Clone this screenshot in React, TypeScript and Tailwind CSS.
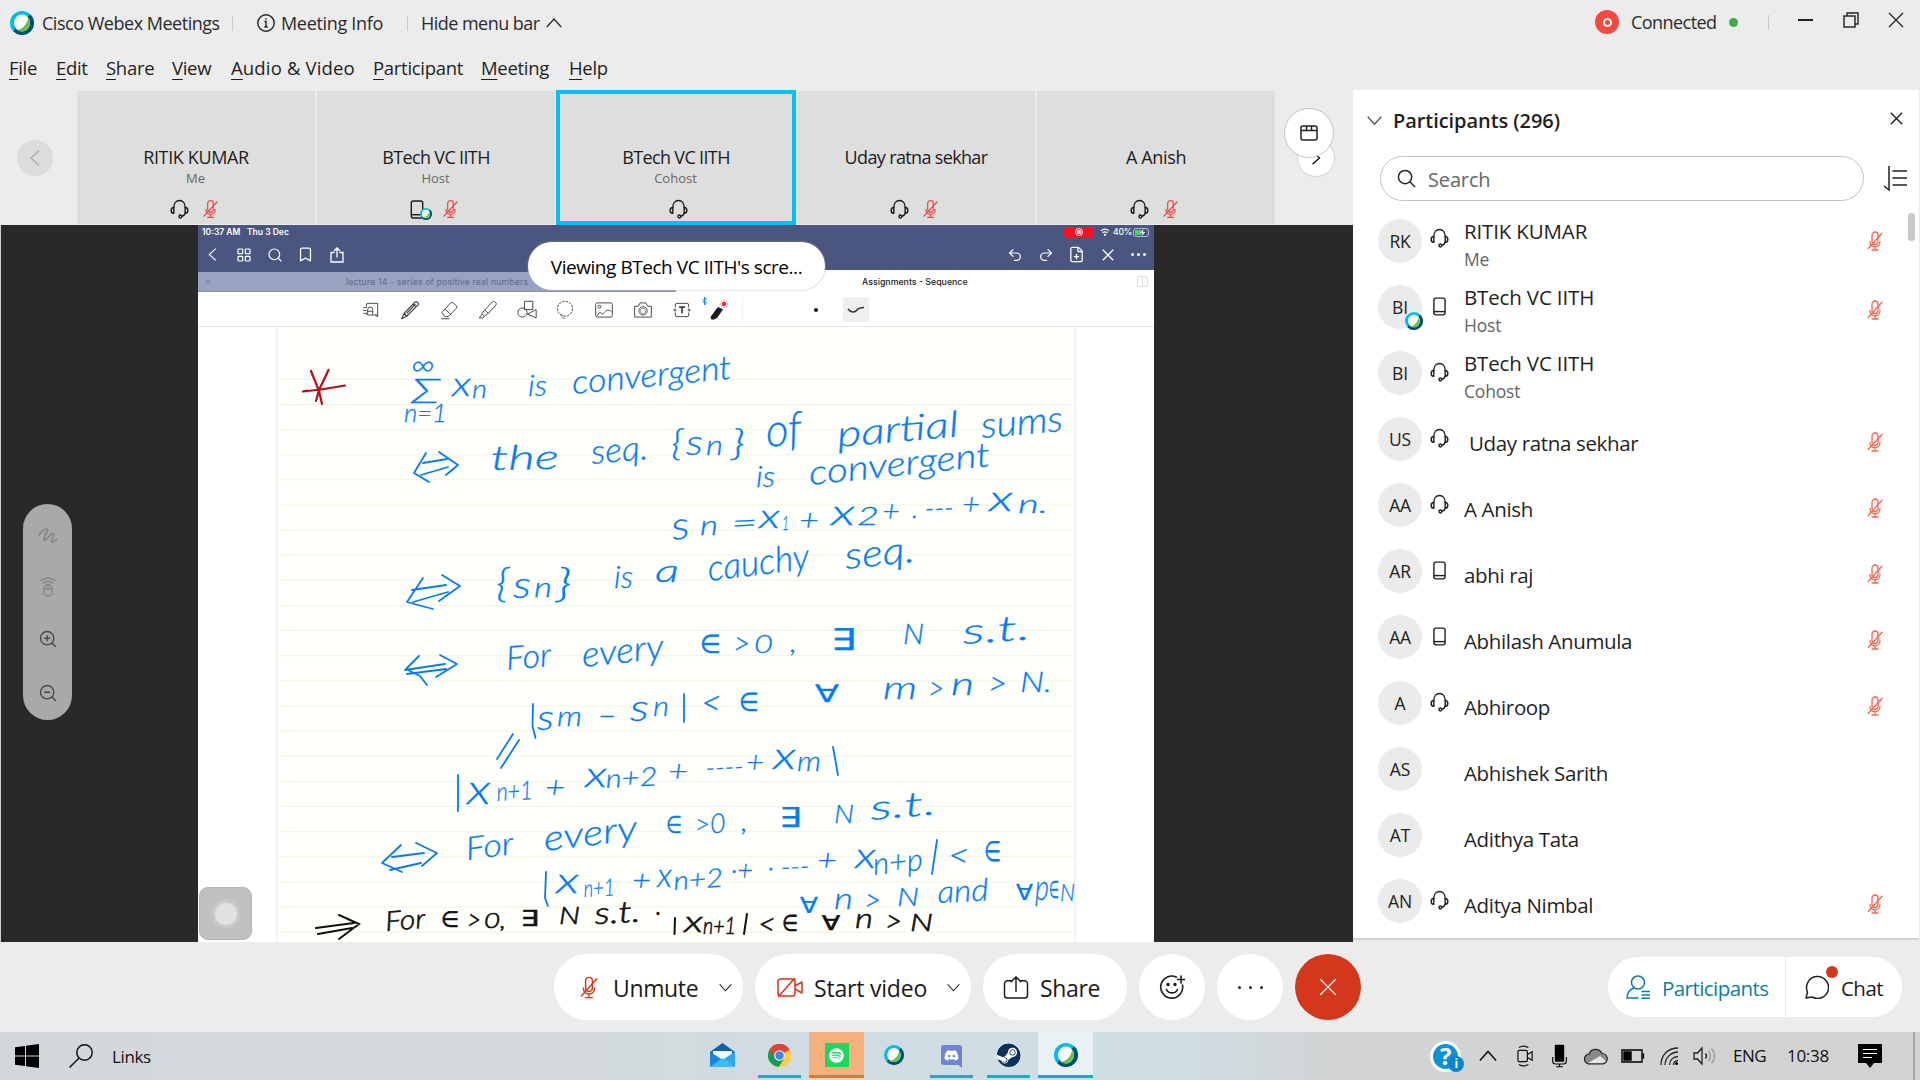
import React from "react";
import { Search, ZoomIn, ZoomOut, Bookmark, LayoutGrid, Undo2, Redo2, FilePlus } from "lucide-react";
import { FaDiscord, FaSteam, FaSpotify } from "react-icons/fa";

const WebexLogo = ({ className = "" }: { className?: string }) => (
  <svg viewBox="0 0 24 24" className={className}>
    <circle cx="12" cy="12" r="12" fill="#00bceb" />
    <path d="M20.5 3.5A12 12 0 0 1 3.5 20.5L8 12z" fill="#005073" />
    <ellipse cx="12" cy="12" rx="8" ry="8.4" fill="#fff" />
    <path d="M18.2 6.6c2.6 3.4 2.3 8.3-.8 11.400-2.900 2.900-7.200 3.300-10.700 1.100C12.500 18.300 17.400 13.500 18.200 6.600z" fill="#6cc04a" />
  </svg>
);

const Headset = ({ className = "" }: { className?: string }) => (
  <svg viewBox="0 0 20 20" className={className} fill="none" stroke="currentColor" strokeWidth="1.5" strokeLinecap="round">
    <path d="M4 8.500C4 4 6.500 1 10 1s6 3 6 7.500" />
    <path d="M4 8.500C.3 8.500.3 14.500 4 14.500zM16 8.500c3.700 0 3.700 6 0 6z" />
    <path d="M16 14.500c-.4 1.800-1.500 2.700-3.600 3.300" />
    <circle cx="10.900" cy="17.900" r="1.500" />
  </svg>
);

const MicOff = ({ className = "" }: { className?: string }) => (
  <svg viewBox="0 0 16 20" className={className} fill="none" stroke="currentColor" strokeWidth="1.300" strokeLinecap="round">
    <rect x="5" y="1" width="6" height="12.500" rx="3" />
    <path d="M3 10.500c0 7 10 7 10 0M8 16v3M5 19h6M1.200 17.500L15 2.300" />
  </svg>
);

const Phone = ({ className = "" }: { className?: string }) => (
  <svg viewBox="0 0 14 20" className={className} fill="none" stroke="currentColor" strokeWidth="1.500">
    <rect x="1" y="1" width="12" height="18" rx="2.200" />
    <path d="M1 15.500h12" />
  </svg>
);

const Chevron = ({ d, className = "" }: { d: "up" | "down" | "left" | "right"; className?: string }) => (
  <svg viewBox="0 0 20 20" className={className} fill="none" stroke="currentColor" strokeWidth="1.700">
    <path d={{ up: "M1 15L10 5l9 10", down: "M1 5l9 10 9-10", left: "M15 1L5 10l10 9", right: "M5 1l10 9L5 19" }[d]} />
  </svg>
);

const Cross = ({ className = "", w = 1.5 }: { className?: string; w?: number }) => (
  <svg viewBox="0 0 16 16" className={className} fill="none" stroke="currentColor" strokeWidth={w}>
    <path d="M1 1l14 14M15 1L1 15" />
  </svg>
);

const Divider = ({ className = "" }: { className?: string }) => <div className={`h-[15px] w-px bg-[#c9c9c9] ${className}`} />;

function TitleBar() {
  return (
    <div className="flex h-[46px] items-center text-[18px] text-[#2b2b2b]">
      <WebexLogo className="ml-[10px] h-6 w-6" />
      <span className="ml-2 w-[190px] tracking-[-0.480px]">Cisco Webex Meetings</span>
      <Divider />
      <svg viewBox="0 0 18 18" className="ml-6 h-[18px] w-[18px]" fill="none" stroke="#222" strokeWidth="1.400">
        <circle cx="9" cy="9" r="8.200" />
        <path d="M7.500 7.500H9V13M7.300 13h3.500M8.900 4.300v1.500" />
      </svg>
      <span className="ml-[6px] w-[126px] tracking-[-0.320px]">Meeting Info</span>
      <Divider />
      <span className="ml-[13px] w-[125px] tracking-[-0.530px]">Hide menu bar</span>
      <Chevron d="up" className="h-4 w-4" />
      <div className="ml-auto flex items-center pb-[2px]">
        <div className="flex h-6 w-6 items-center justify-center rounded-full bg-[#f5483f]">
          <div className="h-[9px] w-[9px] rounded-full border-2 border-white" />
        </div>
        <span className="ml-[12px] w-[98px] tracking-[-0.550px]">Connected</span>
        <div className="h-[9px] w-[9px] rounded-full bg-[#3fad46]" />
        <Divider className="ml-[30px]" />
        <div className="mb-[4px] ml-[29px] flex items-center">
          <div className="h-[2px] w-[15px] bg-[#222]" />
          <svg viewBox="0 0 16 16" className="ml-[30px] h-4 w-4" fill="none" stroke="#222" strokeWidth="1.400">
            <rect x="1" y="4" width="11" height="11" />
            <path d="M4 4V1h11v11h-3" />
          </svg>
          <Cross className="mr-4 ml-[29px] h-4 w-4" w={1.4} />
        </div>
      </div>
    </div>
  );
}

const menus: [string, string][] = [
  ["File", "w-[47px]"],
  ["Edit", "w-[50px]"],
  ["Share", "w-[66px]"],
  ["View", "w-[59px]"],
  ["Audio & Video", "w-[142px] tracking-[0.150px]"],
  ["Participant", "w-[108px]"],
  ["Meeting", "w-[88px]"],
  ["Help", "w-[60px]"],
];

function MenuBar() {
  return (
    <div className="flex h-[44px] items-center pl-[9px] text-[18.500px] tracking-[-0.300px] whitespace-nowrap text-[#1f1f1f]">
      {menus.map(([m, w]) => (
        <span key={m} className={w}>
          <span className="underline decoration-1 underline-offset-4">{m[0]}</span>
          {m.slice(1)}
        </span>
      ))}
    </div>
  );
}

const tiles = [
  { name: "RITIK KUMAR", role: "Me", dev: "h", mute: true, track: "tracking-[-0.350px]" },
  { name: "BTech VC IITH", role: "Host", dev: "p", mute: true, track: "tracking-[-0.650px]" },
  { name: "BTech VC IITH", role: "Cohost", dev: "h", mute: false, active: true, track: "tracking-[-0.650px]" },
  { name: "Uday ratna sekhar", role: "", dev: "h", mute: true, track: "tracking-[-0.650px]" },
  { name: "A Anish", role: "", dev: "h", mute: true, track: "tracking-[-0.350px]" },
];

function VideoStrip() {
  return (
    <div className="flex h-[135px] pt-px">
      <div className="flex w-[77px] items-center pl-[17px]">
        <div className="flex h-9 w-9 items-center justify-center rounded-full bg-[#dcdcdc] text-[#aaa]">
          <Chevron d="left" className="h-4 w-4" />
        </div>
      </div>
      <div className="flex gap-[2px]">
        {tiles.map((t, i) => (
          <div key={i} className="relative flex h-[133px] w-[238px] flex-col items-center bg-[#dedede]">
            {t.active && <div className="absolute -inset-px -bottom-px z-10 border-4 border-[#00c1f5]" />}
            <div className={`mt-[54px] text-[18px] leading-6 text-[#1c1c1c] ${t.track}`}>{t.name}</div>
            <div className="h-5 pr-px text-[13px] leading-[18px] text-[#666]">{t.role}</div>
            <div className={`mt-[10px] flex items-center gap-[14px] text-[#1c1c1c] ${t.mute ? "pr-[4px]" : "pl-[5px]"}`}>
              {t.dev === "h" ? (
                <Headset className="h-5 w-[19px]" />
              ) : (
                <div className="relative w-[19px]">
                  <Phone className="h-[19px] w-[14px]" />
                  <WebexLogo className="absolute right-[-3px] -bottom-px h-3 w-3" />
                </div>
              )}
              {t.mute && <MicOff className="h-5 w-[15px] text-[#f5483f]" />}
            </div>
          </div>
        ))}
      </div>
      <div className="relative ml-[9px] w-[69px]">
        <div className="absolute top-[48px] left-[13px] flex h-[38px] w-[38px] items-center justify-center rounded-full border border-[#d5d5d5] bg-white">
          <Chevron d="right" className="h-[14px] w-[14px]" />
        </div>
        <div className="absolute top-[17px] left-0 flex h-[50px] w-[50px] items-center justify-center rounded-full border border-[#c4c4c4] bg-white">
          <svg viewBox="0 0 18 16" className="h-4 w-[18px]" fill="none" stroke="#222" strokeWidth="1.500">
            <rect x="1" y="1" width="16" height="14" rx="2" />
            <path d="M1 5.500h16M6.500 1v4.500M11.500 1v4.500" />
          </svg>
        </div>
      </div>
    </div>
  );
}

type InkProps = { x: number; y: number; w: number; s?: number; r?: number; children: React.ReactNode };

/* One handwritten word: baseline start, written width, size and slope. */
const Ink = ({ x, y, w, s = 26, r = 0, children }: InkProps) => (
  <text x={x} y={y} textLength={w} lengthAdjust="spacingAndGlyphs" fontSize={s} transform={`rotate(${r} ${x} ${y})`}>
    {children}
  </text>
);

const words: [string, number, number, number, number?, number?][] = [
  ["∞", 411, 374, 24, 32],
  ["Σ", 411, 401, 29, 33],
  ["n=1", 404, 420, 43, 25],
  ["x", 452, 394, 19, 34],
  ["n", 472, 396, 15, 26],
  ["is", 528, 394, 19, 30],
  ["convergent", 573, 392, 160, 33, -5.5],
  ["the", 491, 468, 68, 34, -1],
  ["seq.", 592, 462, 57, 34, -5],
  ["{", 671, 453, 12, 36],
  ["s", 686, 453, 17, 36],
  ["n", 706, 453, 17, 27],
  ["}", 731, 453, 14, 36],
  ["of", 767, 445, 36, 46, -5],
  ["partial", 838, 445, 122, 36, -5],
  ["sums", 982, 436, 82, 36, -5],
  ["is", 756, 485, 19, 30],
  ["convergent", 810, 483, 182, 34, -6],
  ["s", 673, 538, 18, 38, -8],
  ["n", 700, 533, 18, 27],
  ["=", 732, 532, 26, 30, -3],
  ["x", 759, 526, 21, 33],
  ["1", 782, 528, 7, 20],
  ["+", 799, 529, 20, 29],
  ["x", 831, 523, 24, 36],
  ["2", 857, 523, 22, 25],
  ["+", 882, 520, 18, 29],
  [". ---", 912, 516, 42, 26, -2],
  ["+", 962, 513, 18, 29],
  ["x", 989, 509, 24, 35],
  ["n.", 1018, 511, 30, 25],
  ["{", 496, 595, 13, 40],
  ["s", 513, 596, 18, 38],
  ["n", 534, 595, 18, 27],
  ["}", 556, 595, 16, 40],
  ["is", 614, 586, 19, 31],
  ["a", 655, 580, 24, 32],
  ["cauchy", 709, 579, 102, 36, -7],
  ["seq.", 846, 567, 70, 37, -6],
  ["For", 507, 668, 45, 33, -5],
  ["every", 583, 665, 82, 35, -6],
  ["∈", 700, 651, 21, 26],
  [">", 733, 653, 17, 33],
  ["0", 754, 651, 19, 25],
  [",", 790, 650, 7, 28],
  ["∃", 831, 648, 25, 30],
  ["N", 903, 642, 21, 27],
  ["s.t.", 963, 642, 68, 35, -4],
  ["s", 537, 728, 17, 36],
  ["m", 557, 724, 25, 28],
  ["−", 598, 724, 18, 28],
  ["s", 630, 719, 19, 37],
  ["n", 653, 714, 16, 28],
  ["<", 701, 713, 21, 35],
  ["∈", 739, 709, 20, 26],
  ["∀", 815, 700, 24, 24],
  ["m", 883, 697, 34, 31],
  [">", 928, 698, 16, 33],
  ["n", 951, 693, 23, 31],
  [">", 988, 693, 19, 33],
  ["N.", 1020, 690, 32, 28],
  ["x", 467, 802, 24, 42],
  ["n+1", 497, 799, 36, 26, -3],
  ["+", 545, 796, 20, 30],
  ["x", 585, 785, 22, 35],
  ["n+2", 606, 786, 52, 26, -3],
  ["+", 668, 780, 20, 29],
  ["----", 706, 775, 38, 26, -3],
  ["+", 746, 771, 18, 29],
  ["x", 773, 767, 23, 37],
  ["m", 797, 769, 24, 27],
  ["For", 467, 858, 48, 32, -7],
  ["every", 545, 849, 94, 35, -7],
  ["∈", 666, 831, 16, 24],
  [">0", 695, 832, 31, 27, -3],
  [",", 741, 829, 7, 28],
  ["∃", 779, 825, 22, 27],
  ["N", 834, 821, 20, 26],
  ["s.t.", 871, 818, 66, 34, -5],
  ["x", 556, 891, 23, 35],
  ["n+1", 584, 895, 31, 24, -3],
  ["+", 632, 888, 19, 28],
  ["x", 657, 885, 15, 33],
  ["n+2", 674, 888, 50, 26, -4],
  ["·+", 731, 878, 22, 28],
  ["· ---", 768, 875, 42, 26, -3],
  ["+", 817, 869, 20, 29],
  ["x", 855, 866, 21, 35],
  ["n+p", 874, 873, 50, 31, -6],
  ["<", 948, 865, 22, 34],
  ["∈", 984, 859, 17, 28],
  ["∀", 800, 911, 18, 22],
  ["n", 834, 907, 19, 30],
  [">", 864, 909, 17, 32],
  ["N", 897, 904, 22, 26],
  ["and", 938, 901, 51, 31, -3],
  ["∀", 1016, 898, 17, 22],
  ["p", 1035, 898, 14, 36],
  ["∈", 1049, 896, 10, 24],
  ["N", 1060, 899, 15, 24],
];

const blackWords: [string, number, number, number, number?, number?][] = [
  ["For", 386, 929, 40, 27, -5],
  ["∈", 441, 925, 18, 22],
  [">", 467, 928, 14, 29],
  ["0,", 484, 926, 22, 22],
  ["∃", 521, 924, 18, 22],
  ["N", 559, 922, 21, 23],
  ["s.t.", 595, 922, 46, 30, -3],
  ["·", 655, 920, 6, 30],
  ["x", 684, 930, 19, 30],
  ["n+1", 703, 932, 33, 23],
  ["<", 758, 933, 18, 31],
  ["∈", 782, 929, 16, 23],
  ["∀", 822, 928, 18, 20],
  ["n", 855, 926, 18, 28],
  [">", 885, 930, 17, 31],
  ["N", 910, 929, 23, 23],
];

const ruled = Array.from({ length: 23 }, (_, i) => 379.300 + i * 25.130);

function Notebook() {
  return (
    <svg viewBox="198 327 956 615" className="block h-[615px] w-[956px] bg-white">
      <rect x="277" y="327" width="798" height="615" fill="#fffffc" />
      {ruled.map((y) => (
        <path key={y} d={`M277 ${y}H1075`} stroke="#f4f2de" strokeWidth="1" />
      ))}
      <path d="M277 329V942M1075 329V942" stroke="#eeecee" strokeWidth="1.300" />
      <g fill="none" stroke="#b40d18" strokeWidth="2.200" strokeLinecap="round">
        <path d="M303 391.500l18-2 24-4M311 371l8 20 3 13M328.500 370l-9.500 20-3 11M303 391.500l4-1" />
      </g>
      <g fill="none" stroke="#067bfa" strokeWidth="1.800" strokeLinecap="round" strokeLinejoin="round">
        <path d="M426 453l-12 20 15 9M423 463l24-4M421 475l27-8M439 452l19 13-12 10" />
        <path d="M423 578l-16 24 26 7M412 590l34-5M413 602l35-10M442 575l18 11-21 15" />
        <path d="M419 656l-13 13 14 7 7 9M405 670l40-6M407 674l39-5M440 655l17 9-21 13" />
        <path d="M401 845l-19 18 20 9M392 857l32-4M390 870l31-7M416 843l21 10-15 13" />
        <path d="M533 704l-.5 22 3 12M684 694v28M513 734l-16 25M519 740l-18 28M458 775v36M833 747l5 28M546 872l-1 26 3 8M937 840l-5 34" />
      </g>
      <g fill="none" stroke="#111" strokeWidth="2" strokeLinecap="round">
        <path d="M316 928l38-5M318 934l34-6M339 915l20 9-20 15M675 918l-.5 16M747 914l-3 20" />
      </g>
      <g fill="#067bfa" stroke="#067bfa" strokeWidth=".3" transform="translate(0 2)" className="font-['Lato','DejaVu_Sans',sans-serif] font-light italic">
        {words.map(([t, x, y, w, s, r], i) => (
          <Ink key={i} x={x} y={y} w={w} s={s} r={r}>{t}</Ink>
        ))}
      </g>
      <g fill="#111" stroke="#111" strokeWidth=".6" transform="translate(0 2)" className="font-['Lato','DejaVu_Sans',sans-serif] font-light italic">
        {blackWords.map(([t, x, y, w, s, r], i) => (
          <Ink key={i} x={x} y={y} w={w} s={s} r={r}>{t}</Ink>
        ))}
      </g>
    </svg>
  );
}

const ShareUp = ({ className = "", w = 1.5 }: { className?: string; w?: number }) => (
  <svg viewBox="0 0 26 24" className={className} fill="none" stroke="currentColor" strokeWidth={w} strokeLinecap="round">
    <path d="M7.500 5H4a3 3 0 0 0-3 3v12a3 3 0 0 0 3 3h18a3 3 0 0 0 3-3V8a3 3 0 0 0-3-3h-3.500M13 16V1.500M8 6l5-5 5 5" />
  </svg>
);

const toolIcons: React.ReactNode[] = [
  <><path d="M6.500 8V6a2 2 0 0 1 2-2H20v16l-3-2H8.500a2 2 0 0 1-2-2M20 18h-3" /><path d="M3 9h4M2.500 12.500h4M3 16h4M8 17v-5.500a3 3 0 0 1 6 0V17M8 13.500h6" /></>,
  <path d="M2 22.500l3-6.500L18 2.500q2-1 3.500 1T21 6.500L8 19.500zM5 16l3 3.500M8 16L18.500 5M16 5l2.500 2.500" strokeWidth="1.400" />,
  <path d="M3.500 15L14 3.500q1.500-1 3 0l4 3.500q1 1.500 0 3L11 20H7zM7 11l7.500 6.500M2.500 22.500h10" />,
  <path d="M8 12L17.500 2q1-1 2.500 0l1.500 1.500q1 1 0 2.500L12.500 16zM8 12l-3.500 4.500 3 3L12.500 16M5 17l-3.500 4.500h4L7.500 20" />,
  <><rect x="9" y="1.500" width="10" height="10" /><circle cx="6.500" cy="15" r="5.500" /><path d="M23 11.500v10L12.500 17z" /></>,
  <><circle cx="12" cy="10.500" r="9" strokeDasharray="3 1.300" /><path d="M7 17c2 1 1 3 2 4s3 1 4 2" strokeDasharray="3 1.500" /></>,
  <><rect x="2" y="3.500" width="20" height="17" rx="2" /><circle cx="6.500" cy="8" r="1.700" /><path d="M4 19c2-5 4-5 5-3s3 0 4-1.500 4-4 8-.5" /></>,
  <><path d="M2 7.500h4.500l2-4h7l2 4H22v13H2z" /><circle cx="12" cy="13" r="5" /><circle cx="12" cy="13" r="3.300" strokeWidth=".6" /></>,
  <><path d="M4 9V6a2 2 0 0 1 2-2h12a2 2 0 0 1 2 2v3M4 15v3a2 2 0 0 0 2 2h12a2 2 0 0 0 2-2v-3" /><circle cx="3.500" cy="12" r="1.200" /><circle cx="20.500" cy="12" r="1.200" /><path d="M8.500 8.500h7M12 8.500V16" strokeWidth="2" /></>,
];

function Tablet() {
  return (
    <div className="flex h-[717px] w-[956px] flex-col bg-white font-['Inter',sans-serif] tracking-normal">
      <div className="h-[47px] bg-[#4a567f] text-white">
        <div className="flex h-[14px] items-center pl-1 text-[8.500px] font-semibold">
          <span className="w-[45px]">10:37 AM</span>
          <span>Thu 3 Dec</span>
          <div className="ml-auto flex h-[11px] w-[30px] items-center justify-center rounded-[4px] bg-[#fa0f25]">
            <div className="flex h-2 w-2 items-center justify-center rounded-full border border-white"><div className="h-1 w-1 rounded-full bg-white" /></div>
          </div>
          <svg viewBox="0 0 12 10" className="ml-[6px] h-2 w-[10px]" fill="none" stroke="white" strokeWidth="1.500"><path d="M1 3.500q5-4 10 0M3 6q3-2.500 6 0" /><circle cx="6" cy="8.500" r=".7" /></svg>
          <span className="ml-[3px] w-[20px] text-[8.500px] font-medium tracking-[-0.200px]">40%</span>
          <div className="relative mr-[5px] h-[9px] w-4 rounded-[3px] border border-white/60 p-px"><div className="h-full w-[6px] bg-[#3ddc5b]" /><svg viewBox="0 0 8 8" className="absolute top-0 left-[5px] h-[7px] w-[7px]"><path d="M5 0L1 4.500h2.500L3 8l4-4.500H4.500z" fill="#fff" /></svg></div>
        </div>
        <div className="flex h-[31px] items-center">
          <div className="flex w-[31px] justify-center pr-[3px]"><Chevron d="left" className="h-[13px] w-[13px]" /></div>
          <div className="flex w-[29px] justify-center"><LayoutGrid className="h-4 w-4" strokeWidth={1.800} /></div>
          <div className="flex w-[33px] justify-center"><Search className="h-4 w-4" strokeWidth={1.800} /></div>
          <div className="flex w-[29px] justify-center"><Bookmark className="h-[17px] w-[17px]" strokeWidth={1.800} /></div>
          <div className="flex w-[33px] justify-center">
            <svg viewBox="0 0 14 16" className="h-4 w-[14px]" fill="none" stroke="currentColor" strokeWidth="1.300"><path d="M4.500 5.500H1V15h12V5.500H9.500M7 10.500V1M4 4l3-3 3 3" /></svg>
          </div>
          <div className="ml-auto flex w-[155px] items-center">
            <div className="flex w-[31px] justify-center"><Undo2 className="h-4 w-4" strokeWidth={1.800} /></div>
            <div className="flex w-[31px] justify-center"><Redo2 className="h-4 w-4" strokeWidth={1.800} /></div>
            <div className="flex w-[31px] justify-center"><FilePlus className="h-[17px] w-[17px]" strokeWidth={1.800} /></div>
            <div className="flex w-[31px] justify-center"><Cross className="h-3 w-3" w={1.800} /></div>
            <div className="flex w-[30px] justify-center gap-[3px]"><i className="h-[3px] w-[3px] rounded-full bg-white" /><i className="h-[3px] w-[3px] rounded-full bg-white" /><i className="h-[3px] w-[3px] rounded-full bg-white" /></div>
          </div>
        </div>
      </div>
      <div className="flex h-[20px] bg-[#4a567f] text-[8.700px] leading-[20px]">
        <div className="flex w-[478px] items-center border-b border-[#8590ae] bg-[#99a2c0] pl-[7px] text-[#5f6b91]">
          <Cross className="h-[6px] w-[6px]" w={2} />
          <span className="ml-[135px] tracking-[0.160px]">lecture 14 - series of positive real numbers</span>
        </div>
        <div className="relative -mt-[2px] flex h-[22px] flex-1 items-center bg-white pt-px pl-[186px] font-medium text-[#222]">
          <span className="text-[8.800px]">Assignments - Sequence</span>
          <div className="mr-[6px] ml-auto flex h-[11px] w-[11px] rounded-[2px] border border-[#ddd]"><div className="w-[5px] border-r border-[#ddd]" /></div>
        </div>
      </div>
      <div className="flex h-[35px] items-center border-b border-[#e6e6e0] pt-px text-[#3c3c3c]">
        <div className="ml-[154px] flex">
          {toolIcons.map((ic, i) => (
            <div key={i} className="flex w-[38.800px] justify-center">
              <svg viewBox="0 0 24 24" className="h-5 w-5" fill="none" stroke="currentColor" strokeWidth="1.100" strokeLinejoin="round">{ic}</svg>
            </div>
          ))}
        </div>
        <svg viewBox="0 0 30 30" className="-ml-[2px] h-[30px] w-[30px]">
          <path d="M3.500 4l4 4-2 2V2l2 2-4 4" fill="none" stroke="#1a86f5" strokeWidth="1" />
          <path d="M12 22l7-9.500 4.500 2-6 8.500q-2.500 1.500-5 1z" fill="#1c1c22" stroke="#1c1c22" strokeLinejoin="round" />
          <path d="M25 4.500v9M20.500 9h9M22 6l6 6M28 6l-6 6" stroke="#ff6a74" strokeWidth=".8" />
          <circle cx="25" cy="9" r="2" fill="#f01a2c" />
        </svg>
        <div className="ml-[13px] h-6 w-px bg-[#eee]" />
        <div className="ml-[71px] h-1 w-1 rounded-full bg-[#111]" />
        <div className="ml-[25px] flex h-[25px] w-[26px] items-center justify-center rounded-[2px] bg-[#f0eef1]">
          <svg viewBox="0 0 18 8" className="h-2 w-[18px]" fill="none" stroke="#333" strokeWidth="1.600"><path d="M1 3c3 4 7 3.500 9 1s4-2.500 7-2.500" /></svg>
        </div>
      </div>
      <Notebook />
    </div>
  );
}

function Stage() {
  return (
    <div className="relative flex h-[717px] w-[1353px] border-l border-[#cfcfcf] bg-[#292929] pl-[197px]">
      <Tablet />
      <div className="absolute top-[17px] left-[527px] flex h-[48px] w-[297px] items-center justify-center rounded-full bg-white pt-[2px] text-[19px] tracking-[-0.450px] whitespace-nowrap text-black shadow-[0_0_2px_#aaa]">
        Viewing BTech VC IITH's scre...
      </div>
      <div className="absolute top-[279px] left-[22px] flex h-[216px] w-[49px] flex-col items-center rounded-full bg-[#a9a9a9] text-[#858585]">
        <svg viewBox="0 0 20 16" className="mt-6 h-4 w-5" fill="none" stroke="currentColor" strokeWidth="1.600" strokeLinecap="round">
          <path d="M1 7C5 2 9-.5 9.500 2 10 4.500 5 9 6 11.500 7.500 15 13 3.500 15.500 6c1.500 2-3 5.500-2 7.500 1 1.500 4-1 5-2.500" />
        </svg>
        <svg viewBox="0 0 18 20" className="mt-[33px] h-5 w-[18px]" fill="none" stroke="currentColor" strokeWidth="1.300">
          <path d="M1 4q8-6 16 0M3.500 6.500q5.500-4 11 0M5 12h8M9 8v4" />
          <rect x="5" y="7.500" width="8" height="11.500" rx="4" />
        </svg>
        <ZoomIn className="mt-[32px] ml-px h-5 w-5 text-[#4a4a4a]" strokeWidth={1.700} />
        <ZoomOut className="mt-[34px] ml-px h-5 w-5 text-[#4a4a4a]" strokeWidth={1.700} />
      </div>
      <div className="absolute top-[662px] left-[198px] flex h-[53px] w-[53px] items-center justify-center rounded-[9px] border border-[#b5b5b5] bg-[#c0c0c0]">
        <div className="h-[22px] w-[22px] rounded-full bg-[#e1e1e1] shadow-[0_0_3px_3px_#cccccc]" />
      </div>
    </div>
  );
}

const people = [
  { i: "RK", n: "RITIK KUMAR", r: "Me", d: "h", m: true },
  { i: "BI", n: "BTech VC IITH", r: "Host", d: "p", m: true, host: true },
  { i: "BI", n: "BTech VC IITH", r: "Cohost", d: "h", m: false },
  { i: "US", n: "\u00a0Uday ratna sekhar", d: "h", m: true },
  { i: "AA", n: "A Anish", d: "h", m: true },
  { i: "AR", n: "abhi raj", d: "p", m: true },
  { i: "AA", n: "Abhilash Anumula", d: "p", m: true },
  { i: "A", n: "Abhiroop", d: "h", m: true },
  { i: "AS", n: "Abhishek Sarith", d: "", m: false },
  { i: "AT", n: "Adithya Tata", d: "", m: false },
  { i: "AN", n: "Aditya Nimbal", d: "h", m: true },
];

function Participants() {
  return (
    <div className="mr-px flex h-[850px] w-[566px] flex-col border-b-2 border-[#d2d4d6] bg-white">
      <div className="flex h-[60px] items-center pl-[14px] text-[#1f1f1f]">
        <Chevron d="down" className="h-[15px] w-[15px] text-[#555]" />
        <span className="ml-[11px] pt-px text-[20px] font-semibold tracking-[-0.060px]">Participants (296)</span>
        <Cross className="mr-[16px] mb-[3px] ml-auto h-[13px] w-[13px]" w={1.700} />
      </div>
      <div className="mt-[6px] flex items-center pl-[27px]">
        <div className="flex h-[45px] w-[484px] items-center rounded-full border border-[#c4c4c4] pl-[16px]">
          <svg viewBox="0 0 20 20" className="h-[19px] w-[19px]" fill="none" stroke="#222" strokeWidth="1.500"><circle cx="8.500" cy="8.500" r="7" /><path d="M13.500 13.500l5.500 5.500" /></svg>
          <span className="ml-3 pt-[2px] text-[20px] tracking-[-0.150px] text-[#666]">Search</span>
        </div>
        <svg viewBox="0 0 24 25" className="ml-[19px] h-[25px] w-6" fill="none" stroke="#222" strokeWidth="1.500"><path d="M1 20l5 4V0M9.500 5H24M9.500 12H24M9.500 19H24" /></svg>
      </div>
      <div className="relative mt-[7px] flex flex-col pl-[25px]">
        <div className="absolute top-[5px] right-[4px] h-7 w-[7px] rounded-sm bg-[#c8c8c8]" />
        {people.map((p, k) => (
          <div key={k} className="flex h-[66px] items-center">
            <div className="relative flex h-11 w-11 items-center justify-center rounded-full bg-[#ebebeb] pt-px text-[17.500px] tracking-[-0.200px] text-[#222]">
              {p.i}
              {p.host && <WebexLogo className="absolute right-[-1px] bottom-[-1px] h-[18px] w-[18px]" />}
            </div>
            <div className={`ml-[7px] flex w-[20px] justify-center text-[#1f1f1f] ${k === 0 ? "pb-[6px]" : p.d === "p" && k > 1 ? "pb-px" : "pb-[2px]"}`}>
              {p.d === "h" && <Headset className="h-5 w-[19px]" />}
              {p.d === "p" && <Phone className="h-[19px] w-[13px]" />}
            </div>
            <div className="ml-[15px] flex-1 text-[20.500px] tracking-[-0.350px] text-[#1f1f1f]">
              <div className={p.r ? "pt-[8px] leading-7 tracking-[-0.150px]" : "pt-[8px] leading-7"}>{p.n}</div>
              {p.r && <div className="text-[17.500px] leading-7 tracking-[-0.200px] text-[#666]">{p.r}</div>}
            </div>
            {p.m && <MicOff className={`mr-[36px] h-5 w-4 text-[#fa6450] ${k === 0 ? "" : "mt-[5px]"}`} />}
          </div>
        ))}
      </div>
    </div>
  );
}

function Controls() {
  return (
    <div className="flex h-[90px] items-center bg-[#ececec] text-[#1a1a1a]">
      <div className="ml-[554px] flex gap-[12px] text-[23px] tracking-[-0.350px] whitespace-nowrap">
        <div className="flex h-[66px] w-[189px] items-center rounded-full bg-white pl-[26px]">
          <MicOff className="h-[23px] w-[18px] text-[#d4371c]" />
          <span className="ml-[15px] w-[106px] pt-[2px]">Unmute</span>
          <Chevron d="down" className="h-[13px] w-[13px]" />
        </div>
        <div className="flex h-[66px] w-[216px] items-center rounded-full bg-white pl-[22px]">
          <svg viewBox="0 0 26 22" className="h-[22px] w-[26px]" fill="none" stroke="#d4371c" strokeWidth="1.500" strokeLinejoin="round">
            <rect x="1" y="3" width="17" height="17" rx="3" /><path d="M18 10l7-4v11l-7-4M1 21L18 2" />
          </svg>
          <span className="ml-[11px] w-[133px] pt-[2px] tracking-[-0.200px]">Start video</span>
          <Chevron d="down" className="h-[13px] w-[13px]" />
        </div>
        <div className="flex h-[66px] w-[144px] items-center rounded-full bg-white pl-[20px]">
          <ShareUp className="h-[23px] w-[26px]" />
          <span className="ml-[11px] pt-[2px]">Share</span>
        </div>
        <div className="flex h-[66px] w-[66px] items-center justify-center rounded-full bg-white">
          <svg viewBox="0 0 26 26" className="h-[26px] w-[26px]" fill="none" stroke="currentColor" strokeWidth="1.600" strokeLinecap="round">
            <path d="M17.500 3.200A11 11 0 1 0 23.500 11M7.500 15.500c2 4.500 9 4.500 11 0M22 2v7M18.500 5.500h7" /><circle cx="9" cy="10.500" r=".9" fill="currentColor" /><circle cx="16" cy="10.500" r=".9" fill="currentColor" />
          </svg>
        </div>
        <div className="flex h-[66px] w-[66px] items-center justify-center gap-2 rounded-full bg-white">
          <i className="h-[3px] w-[3px] rounded-full bg-[#222]" /><i className="h-[3px] w-[3px] rounded-full bg-[#222]" /><i className="h-[3px] w-[3px] rounded-full bg-[#222]" />
        </div>
        <div className="flex h-[66px] w-[66px] items-center justify-center rounded-full bg-[#d4371c] text-white">
          <Cross className="h-[18px] w-[18px]" w={1.2} />
        </div>
      </div>
      <div className="mr-[18px] ml-auto flex h-[60px] items-center rounded-full bg-white text-[20.500px] tracking-[-0.550px]">
        <div className="flex h-full w-[178px] items-center border-r border-[#ececec] pl-[18px] text-[#0a7fa6]">
          <svg viewBox="0 0 24 24" className="h-6 w-6" fill="none" stroke="currentColor" strokeWidth="1.500">
            <circle cx="12" cy="7.500" r="6.500" /><path d="M8 13c-4 1.500-7 5-7 10h11.500M15.500 16.500H24M15.500 20H24M15.500 23.300H24" />
          </svg>
          <span className="ml-[12px] pt-[2px]">Participants</span>
        </div>
        <div className="relative flex w-[116px] items-center pl-[19px]">
          <svg viewBox="0 0 24 24" className="h-6 w-6" fill="none" stroke="#222" strokeWidth="1.500"><path d="M1 23l1.500-6A11 11 0 1 1 7 22z" strokeLinejoin="round" /></svg>
          <div className="absolute -top-[5px] left-10 h-3 w-3 rounded-full bg-[#d4371c]" />
          <span className="ml-[12px] pt-[2px]">Chat</span>
        </div>
      </div>
    </div>
  );
}

const MailIcon = () => (
  <svg viewBox="0 0 25 24" className="h-6 w-[25px]">
    <path d="M0 9L12.500 0 25 9v14H0z" fill="#0d5fb3" /><path d="M3 8h19v8H3z" fill="#f3f8fc" /><path d="M0 8.500L12.500 17 0 24z" fill="#1a86dc" /><path d="M25 8.500L12.500 17 25 24z" fill="#2aa7f0" /><path d="M0 24l12.500-9L25 24z" fill="#36c0f8" />
  </svg>
);

const ChromeIcon = () => (
  <svg viewBox="0 0 24 24" className="h-[23px] w-[23px]">
    <circle cx="12" cy="12" r="12" fill="#ffcd40" />
    <path d="M12 12L1.600 6A12 12 0 0 1 22.400 6z" fill="#db4437" /><path d="M12 12L1.600 6a12 12 0 0 0 9.400 18l6-9z" fill="#0f9d58" />
    <path d="M12 6.500h10.700A12 12 0 0 0 1.600 6L7 14z" fill="#db4437" />
    <circle cx="12" cy="12" r="5.600" fill="#f1f1f1" /><circle cx="12" cy="12" r="4.400" fill="#4285f4" />
  </svg>
);

const SteamIcon = () => (
  <div className="flex h-6 w-6 items-center justify-center overflow-hidden rounded-full bg-white"><FaSteam className="h-[25px] w-[25px] shrink-0 text-[#0e2f5c]" /></div>
);

const DiscordIcon = () => (
  <div className="relative flex h-5 w-[21px] items-center justify-center rounded-[3px] bg-[#6f85d1]">
    <FaDiscord className="h-[15px] w-[15px] text-white" />
    <svg viewBox="0 0 6 5" className="absolute right-0 -bottom-[3px] h-[5px] w-[6px]"><path d="M0 0h6v5z" fill="#6f85d1" /></svg>
  </div>
);

const apps: { icon: React.ReactNode; bar: string; bg: string }[] = [
  { icon: <MailIcon />, bar: "", bg: "" },
  { icon: <ChromeIcon />, bar: "w-[43px] bg-[#00b7c3]", bg: "" },
  { icon: <div className="flex h-6 w-6 items-center justify-center bg-[#1ed760]"><FaSpotify className="h-[15px] w-[15px] text-white" /></div>, bar: "w-[55px] bg-[#ff7300]", bg: "bg-[#f6b07b]" },
  { icon: <WebexLogo className="h-5 w-5" />, bar: "", bg: "" },
  { icon: <DiscordIcon />, bar: "w-[43px] bg-[#00b7c3]", bg: "" },
  { icon: <SteamIcon />, bar: "w-[43px] bg-[#00b7c3]", bg: "" },
  { icon: <WebexLogo className="h-6 w-6" />, bar: "w-[55px] bg-[#00b7c3]", bg: "bg-[#eaf1f5]" },
];

function Taskbar() {
  return (
    <div className="flex h-12 bg-[linear-gradient(90deg,#d2d8da_0%,#d4dadc_30%,#cfdde3_45%,#cfdfe5_60%,#d2d4d5_69%,#d2d2d2_100%)] text-[#111]">
      <div className="flex w-[694px] items-center pl-[15px]">
        <svg viewBox="0 0 24 24" className="h-6 w-6"><path d="M0 3.300L10 2v9.500H0zM11 1.800L24 0v11.500H11zM0 12.500h10V22L0 20.700zM11 12.500h13V24l-13-1.800z" fill="#000" /></svg>
        <svg viewBox="0 0 24 24" className="ml-[30px] h-6 w-6" fill="none" stroke="#111" strokeWidth="1.500"><circle cx="15.500" cy="8.500" r="7.700" /><path d="M10 14L.5 23.500" /></svg>
        <span className="ml-[19px] pt-[2px] text-[17px] tracking-[-0.350px]">Links</span>
      </div>
      {apps.map((a, i) => (
        <div key={i} className="flex h-12 w-[57.200px] justify-center">
          <div className={`relative flex h-[46px] w-[55px] justify-center pt-[11px] ${a.bg}`}>
            <div className="flex h-6 items-center">{a.icon}</div>
            {a.bar && <div className={`absolute bottom-0 h-[3px] ${a.bar}`} />}
          </div>
        </div>
      ))}
      <div className="ml-auto flex items-center text-[17px] tracking-[-0.550px]">
        <div className="relative mr-[15px] flex h-[31px] w-[31px] items-center justify-center rounded-full border-[3px] border-white bg-[#0a93d8] text-[24px] leading-none font-bold text-white">
          ?
          <div className="absolute -right-[6px] -bottom-[3px] flex h-4 w-4 items-center justify-center rounded-full bg-[#0a84cc] text-[12px] leading-none font-bold">i</div>
        </div>
        <Chevron d="up" className="ml-[3px] h-[18px] w-[18px]" />
        <svg viewBox="0 0 18 24" className="ml-[20px] h-6 w-[17px]" fill="none" stroke="#111" strokeWidth="1.300"><rect x="1" y="6" width="10" height="12" rx="1.500" /><path d="M11 10.500l5-3v9l-5-3M2 3q5-3 10 0M2 21q5 3 10 0" /></svg>
        <svg viewBox="0 0 16 24" className="ml-[18px] h-6 w-[15px]"><rect x="3" y="0" width="10" height="18" rx="1" /><path d="M.7 13v4q0 3.500 3.300 3.500h8q3.300 0 3.300-3.500v-4M8 20v3.500M4.500 23.500h7" fill="none" stroke="#000" strokeWidth="1.200" /></svg>
        <svg viewBox="0 0 25 17" className="ml-[17px] h-[17px] w-[25px]"><path d="M6 16a5 5 0 0 1-1-10 7 7 0 0 1 13-.5A5.300 5.300 0 0 1 19 16z" fill="#8a8a8a" stroke="#222" strokeWidth="1.200" /><path d="M4 15l12-7 6 5-3 2z" fill="#e4e4e4" /></svg>
        <svg viewBox="0 0 24 14" className="ml-[12px] h-[14px] w-6" fill="none" stroke="#000" strokeWidth="1.400"><path d="M1 1h20v12H1zM22.500 4.500v5" /><path d="M3 3h7v8H3z" fill="#000" /></svg>
        <svg viewBox="0 0 19 19" className="ml-[15px] h-[19px] w-[19px]" fill="none" stroke="#222" strokeWidth="1.300"><path d="M1 18C1 8 8 1 18 1M5 18C5 11 11 5 18 5M9.500 18c0-5 4-8.500 8.500-8.500M13.500 18c0-2.500 2-4.500 4.500-4.500" /><circle cx="16.500" cy="16.500" r="1.500" fill="#000" stroke="none" /></svg>
        <svg viewBox="0 0 23 20" className="ml-[14px] h-5 w-[23px]" fill="none" stroke="#222" strokeWidth="1.300"><path d="M1 7h3.500L9 2v16l-4.500-5H1z" /><path d="M12.500 7.500q2 2.500 0 5" /><path d="M15.500 5q4 5 0 10M18.500 2.500q6 7.500 0 15" stroke="#999" /></svg>
        <span className="ml-[17px] w-[54px]">ENG</span>
        <span className="w-[71px] tracking-[-0.300px]">10:38</span>
        <svg viewBox="0 0 24 24" className="h-6 w-6"><path d="M0 0h24v19h-8l-4 5-4-5H0z" /><path d="M5 5.500h14M5 9.500h14M5 13.500h9" stroke="#fff" strokeWidth="1.200" /></svg>
        <div className="ml-[31px] h-12 w-[2px] bg-[#a5a5a5]" />
        <div className="w-[5px]" />
      </div>
    </div>
  );
}

export default function App() {
  return (
    <div className="flex h-[1080px] w-[1920px] flex-col overflow-hidden bg-[#ececec] font-['Open_Sans','Noto_Sans',sans-serif]">
      <TitleBar />
      <MenuBar />
      <div className="flex h-[852px]">
        <div className="w-[1353px]">
          <VideoStrip />
          <Stage />
        </div>
        <Participants />
      </div>
      <Controls />
      <Taskbar />
    </div>
  );
}
